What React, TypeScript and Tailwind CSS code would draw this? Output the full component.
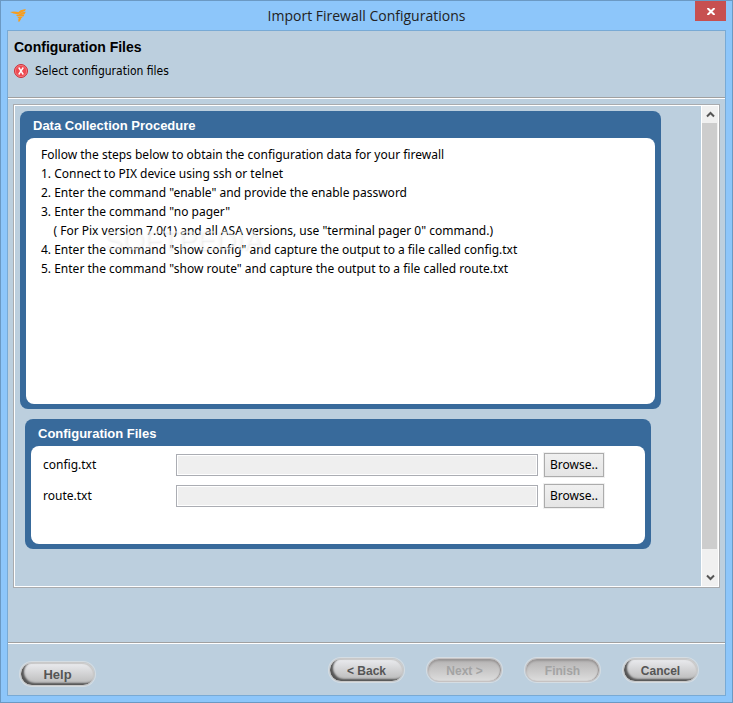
import type { ReactNode } from "react";

function Divider() {
  return <div className="h-[2px] shrink-0 border-t border-[#a0a0a0] bg-white" />;
}

function Card({ title, className, children }: { title: string; className?: string; children: ReactNode }) {
  return (
    <section className={`rounded-lg bg-[#386a9b] px-[6px] pb-[5px] ${className ?? ""}`}>
      <h2 className="h-[27px] pl-[7px] pt-[1px] font-['Liberation_Sans',sans-serif] text-[13px] leading-[27px] font-bold text-white">
        {title}
      </h2>
      <div className="rounded-lg bg-white">{children}</div>
    </section>
  );
}

function FileRow({ name }: { name: string }) {
  return (
    <div className="flex h-[25px] items-center">
      <label htmlFor={name} className="w-[133px] shrink-0">{name}</label>
      <input
        id={name}
        type="text"
        readOnly
        className="h-[22px] min-w-0 flex-1 border border-[#abadb3] bg-[#efefef] px-1 outline-none ring-1 ring-inset ring-white"
      />
      <button type="button" className="ml-[5px] h-[26px] w-[62px] shrink-0 border border-[#f0f0f0] bg-[#acacac] p-px">
        <span className="flex h-full items-center justify-center bg-linear-to-b from-[#f0f0f0] to-[#e5e5e5]">Browse..</span>
      </button>
    </div>
  );
}

function PillButton({ label, disabled = false, large = false }: { label: string; disabled?: boolean; large?: boolean }) {
  const look = disabled
    ? "border-[#c6c2c2] bg-linear-to-b from-[#b4b2b2] to-[#dddddd] text-[#a3a3a3] shadow-[inset_0_2px_2px_#999696,inset_-1px_0_1px_#999696,0_0_0_1px_#d5dde3]"
    : "border-[#c9c9c9] bg-linear-to-b from-[#ebecef] to-[#b9b9b9] text-[#555555] shadow-[inset_3px_-2px_2px_#555555,inset_-1px_1px_1px_#c8c8c8,0_0_0_1px_#d5dde3]";
  return (
    <button
      type="button"
      disabled={disabled}
      className={`h-[24px] w-[75px] rounded-full border font-['Liberation_Sans',sans-serif] leading-[24px] font-bold ${large ? "text-[13px]" : "text-[12px]"} ${look}`}
    >
      {label}
    </button>
  );
}

function BirdLogo() {
  return (
    <svg viewBox="0 0 16 13" className="h-[13px] w-[16px]" fill="#f99d1c" aria-hidden="true">
      <path d="M0 3 L4 2.4 L8.5 3 L10.5 1.2 L15.8 0 L15 2 L12.5 3 L9.5 4.8 L7.5 5.2 L3.5 4.6 Z" />
      <path d="M12 3.2 L15.8 2.8 L14.6 5 L11 5.6 L14.5 5.6 L13.4 7.5 L10 7.6 L7 7 L6 6 L9 5.2 Z" />
      <path d="M7 7.7 L12.6 7.9 L11.2 9.2 L10.8 10.6 L9.4 12.8 L7.8 12.2 L8.8 10.8 L7.6 10.2 L9 9.4 Z" />
    </svg>
  );
}

function Chevron({ d, label }: { d: string; label: string }) {
  return (
    <button type="button" aria-label={label} className="flex h-[17px] shrink-0 items-center justify-center">
      <svg viewBox="0 0 9 7" className="h-[7px] w-[9px]" fill="none" stroke="#555555" strokeWidth="2">
        <path d={d} />
      </svg>
    </button>
  );
}

const steps = [
  "Follow the steps below to obtain the configuration data for your firewall",
  "1. Connect to PIX device using ssh or telnet",
  '2. Enter the command "enable" and provide the enable password',
  '3. Enter the command "no pager"',
  '    ( For Pix version 7.0(1) and all ASA versions, use "terminal pager 0" command.)',
  '4. Enter the command "show config" and capture the output to a file called config.txt',
  '5. Enter the command "show route" and capture the output to a file called route.txt',
];

export default function App() {
  return (
    <div className="flex min-h-screen flex-col border border-[#6b99c3] bg-[#8dc6fa] px-[6px] pb-[6px] font-['Noto_Sans',sans-serif] text-[12px] text-black">
      <header className="grid h-[29px] shrink-0 grid-cols-[46px_1fr_46px] items-center">
        <div className="pl-[3px]"><BirdLogo /></div>
        <h1 className="text-center font-['Open_Sans',sans-serif] text-[14px] leading-5 text-[#222222]">
          Import Firewall Configurations
        </h1>
        <button type="button" aria-label="Close" className="flex h-5 w-[31px] items-center justify-center self-start justify-self-end bg-[#c75050]">
          <svg viewBox="0 0 8 7" className="h-[7px] w-[8px]" stroke="white" strokeWidth="2">
            <path d="M0.5 0 L7.5 7 M7.5 0 L0.5 7" />
          </svg>
        </button>
      </header>

      <main className="flex flex-1 flex-col border border-[#78aad5] bg-[#bccfde]">
        <div className="h-[66px] shrink-0 px-[6px] pt-[7px]">
          <h2 className="font-['Liberation_Sans',sans-serif] text-[14px] leading-[18px] font-bold">Configuration Files</h2>
          <div className="mt-[7px] flex items-center gap-[7px] leading-4">
            <svg viewBox="0 0 14 14" className="size-[14px]" aria-hidden="true">
              <circle cx="7" cy="7" r="6.5" fill="#ed4a52" stroke="#cb3039" />
              <circle cx="7" cy="7" r="5.6" fill="none" stroke="#f7898d" strokeWidth=".7" />
              <path d="M4.7 3.5 L9.3 10.5 M9.3 3.5 L4.7 10.5" stroke="white" strokeWidth="1.4" />
            </svg>
            <p className="font-['DejaVu_Sans_Condensed','DejaVu_Sans',sans-serif]">Select configuration files</p>
          </div>
        </div>
        <Divider />

        <div className="mx-[5px] mt-[5px] mb-[54px] flex flex-1 border border-[#a9abae]">
          <div className="flex flex-1 border border-white">
            <div className="flex-1 pt-[5px] pr-[40px] pl-[5px]">
              <Card title="Data Collection Procedure">
                <div className="relative min-h-[266px] pt-[7px] pl-[15px] leading-[19px]">
                  {steps.map((step) => (
                    <p key={step} className="whitespace-pre">{step}</p>
                  ))}
                  <span className="pointer-events-none absolute top-[87px] left-[78px] font-['Liberation_Sans',sans-serif] text-[28px] leading-8 text-white/50 [text-shadow:1px_1px_2px_rgb(0_0_0/0.08)]">
                    SOFTPEDIA
                  </span>
                </div>
              </Card>
              <Card title="Configuration Files" className="mt-[10px] mr-[10px] ml-[5px]">
                <div className="flex min-h-[98px] flex-col gap-[6px] pt-[6px] pr-[40px] pl-[12px]">
                  <FileRow name="config.txt" />
                  <FileRow name="route.txt" />
                </div>
              </Card>
            </div>
            <div className="flex w-[17px] flex-col border-l border-white bg-[#f0f0f0]">
              <Chevron label="Scroll up" d="M1 5.5 L4.5 2 L8 5.5" />
              <div className="mr-px flex-1 bg-[#cdcdcd]" />
              <div className="h-[20px] shrink-0" />
              <Chevron label="Scroll down" d="M1 1.5 L4.5 5 L8 1.5" />
            </div>
          </div>
        </div>

        <Divider />
        <footer className="flex h-[51px] shrink-0 items-start pt-[14px] pr-[27px] pl-[12px]">
          <div className="mt-[4px]"><PillButton label="Help" large /></div>
          <div className="ml-auto flex gap-[23px]">
            <PillButton label="< Back" />
            <PillButton label="Next >" disabled />
            <PillButton label="Finish" disabled />
            <PillButton label="Cancel" />
          </div>
        </footer>
      </main>
    </div>
  );
}
